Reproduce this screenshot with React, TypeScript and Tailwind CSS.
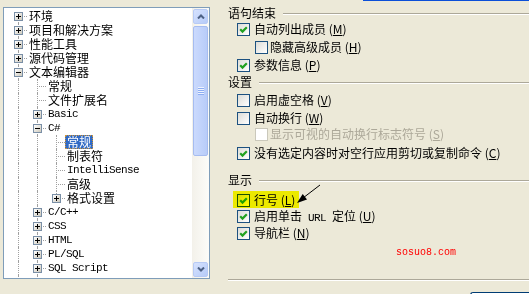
import React from 'react';

type Seg = [number, 'f' | 't' | 'b'];
type Row = { t: string; l: number; e?: '+' | '-'; mono?: boolean; sel?: boolean; v: Seg[] };

// x of the dotted guide line for each level, inside the tree box
const LX = [14, 33, 52];

const v1: Seg[] = [[0, 'f']];
const v2: Seg[] = [[0, 'f'], [1, 'f']];
const v3: Seg[] = [[0, 'f'], [1, 'f'], [2, 'f']];

const rows: Row[] = [
    { t: '环境', l: 0, e: '+', v: [[0, 'b']] },
    { t: '项目和解决方案', l: 0, e: '+', v: v1 },
    { t: '性能工具', l: 0, e: '+', v: v1 },
    { t: '源代码管理', l: 0, e: '+', v: v1 },
    { t: '文本编辑器', l: 0, e: '-', v: v1 },
    { t: '常规', l: 1, v: v2 },
    { t: '文件扩展名', l: 1, v: v2 },
    { t: 'Basic', l: 1, e: '+', mono: true, v: v2 },
    { t: 'C#', l: 1, e: '-', mono: true, v: v2 },
    { t: '常规', l: 2, sel: true, v: v3 },
    { t: '制表符', l: 2, v: v3 },
    { t: 'IntelliSense', l: 2, mono: true, v: v3 },
    { t: '高级', l: 2, v: v3 },
    { t: '格式设置', l: 2, e: '+', v: [[0, 'f'], [1, 'f'], [2, 't']] },
    { t: 'C/C++', l: 1, e: '+', mono: true, v: v2 },
    { t: 'CSS', l: 1, e: '+', mono: true, v: v2 },
    { t: 'HTML', l: 1, e: '+', mono: true, v: v2 },
    { t: 'PL/SQL', l: 1, e: '+', mono: true, v: v2 },
    { t: 'SQL Script', l: 1, e: '+', mono: true, v: v2 },
    { t: 'T-SQL', l: 1, e: '+', mono: true, v: v2 },
];

const segCls = {
    f: 'top-0 h-[14px]',
    t: 'top-0 h-[7px]',
    b: 'top-[7px] h-[7px]',
};

const mono = "font-['Liberation_Mono',monospace] text-[11px] tracking-[-0.6px]";

function Expander({ e }: { e: '+' | '-' }) {
    return (
        <div className="w-[9px] h-[9px] border border-[#7A8FA6] bg-linear-to-br from-white to-[#CDC9BC] flex items-center justify-center">
            <svg width="7" height="7" viewBox="0 0 7 7">
                <path d="M1 3.5 H6" stroke="#000" strokeWidth="1" />
                {e === '+' && <path d="M3.5 1 V6" stroke="#000" strokeWidth="1" />}
            </svg>
        </div>
    );
}

function TreeRow({ r }: { r: Row }) {
    const x = LX[r.l];
    return (
        <div className="relative h-[14px]">
            {r.v.map(([lv, k], i) => (
                <div key={i} className={`absolute w-0 border-l border-dotted border-[#A0A0A0] ${segCls[k]}`} style={{ left: LX[lv] }} />
            ))}
            <div className="absolute top-[7px] h-0 w-[9px] border-t border-dotted border-[#A0A0A0]" style={{ left: x }} />
            {r.e && (
                <div className="absolute top-[3px]" style={{ left: x - 4 }}>
                    <Expander e={r.e} />
                </div>
            )}
            <div className="h-full flex items-center" style={{ paddingLeft: r.sel ? x + 9 : x + 11 }}>
                {r.sel ? (
                    <span className="block h-[14px] px-px leading-[12px] bg-[#316AC5] text-white border border-dotted border-[#CE953A]">{r.t}</span>
                ) : (
                    <span className={`block h-[14px] leading-[14px] ${r.mono ? mono : ''}`}>{r.t}</span>
                )}
            </div>
        </div>
    );
}

function Chevron({ up }: { up?: boolean }) {
    return (
        <svg width="8" height="5" viewBox="0 0 8 5">
            <path d={up ? 'M1 4.5 L4 1.5 L7 4.5' : 'M1 0.5 L4 3.5 L7 0.5'} stroke="#4D6185" strokeWidth="2" fill="none" />
        </svg>
    );
}

function ScrollBar() {
    return (
        <div className="w-[17px] h-full flex flex-col bg-linear-to-r from-[#F3F1EA] to-[#FCFCF9]">
            <div className="mx-px mt-px h-[15px] rounded-[2px] border border-[#B7CAF5] bg-linear-to-br from-[#D6E2FE] to-[#B6CBF8] flex items-center justify-center">
                <Chevron up />
            </div>
            <div className="mx-px mt-[2px] h-[130px] rounded-[2px] border border-[#A6BCF0] bg-linear-to-r from-[#CBDAFD] to-[#B8CCF9] flex flex-col items-center justify-center">
                <div className="w-[6px] h-px bg-[#EEF3FE]" />
                <div className="w-[6px] h-px bg-[#8DADF2]" />
                <div className="w-[6px] h-px bg-[#EEF3FE]" />
                <div className="w-[6px] h-px bg-[#8DADF2]" />
                <div className="w-[6px] h-px bg-[#EEF3FE]" />
                <div className="w-[6px] h-px bg-[#8DADF2]" />
                <div className="w-[6px] h-px bg-[#EEF3FE]" />
                <div className="w-[6px] h-px bg-[#8DADF2]" />
            </div>
            <div className="mx-px mt-auto mb-px h-[15px] rounded-[2px] border border-[#B7CAF5] bg-linear-to-br from-[#D6E2FE] to-[#B6CBF8] flex items-center justify-center">
                <Chevron />
            </div>
        </div>
    );
}

function Box({ on, off }: { on?: boolean; off?: boolean }) {
    return (
        <span
            className={`w-[13px] h-[13px] border shrink-0 flex items-center justify-center ${
                off ? 'border-[#CAC8BB] bg-white' : 'border-[#1C5180] bg-linear-to-br from-[#DCDCD7] to-white'
            }`}
        >
            {on && (
                <svg width="9" height="9" viewBox="0 0 9 9">
                    <path d="M1.2 4.3 L3.5 6.6 L7.8 2.2" stroke="#21A121" strokeWidth="2.2" fill="none" />
                </svg>
            )}
        </span>
    );
}

function Mn({ k }: { k: string }) {
    return (
        <>
            {' '}(<span className="underline">{k}</span>)
        </>
    );
}

function Chk({ lv, on, off, className = '', children }: { lv: 1 | 2; on?: boolean; off?: boolean; className?: string; children: React.ReactNode }) {
    return (
        <div className={`h-[16px] flex items-center ${lv === 1 ? 'pl-[9px] gap-[4px]' : 'pl-[27px] gap-[2px]'} ${className}`}>
            <Box on={on} off={off} />
            <span className={`block h-[14px] leading-[14px] ${off ? 'text-[#ACA899]' : 'text-black'}`}>{children}</span>
        </div>
    );
}

function Etched({ className = '' }: { className?: string }) {
    return <div className={`h-0 border-t border-t-[#ACA899] border-b border-b-white ${className}`} />;
}

function Head({ t, className = '' }: { t: string; className?: string }) {
    return (
        <div className={`h-[16px] flex items-center ${className}`}>
            <span className="block h-[14px] leading-[14px]">{t}</span>
            <Etched className="flex-1 ml-[7px] mt-[2px]" />
        </div>
    );
}

export default function App() {
    return (
        <div className="relative w-[529px] h-[294px] overflow-hidden bg-[#ECE9D8] flex items-start font-['Noto_Sans_CJK_SC',sans-serif] text-[12px] leading-[14px] text-black">
            <div className="absolute top-0 left-[363px] right-0 h-px bg-[#0B4FD8]" />

            {/* tree */}
            <div className="ml-[3px] mt-[7px] w-[207px] h-[272px] shrink-0 border border-[#7F9DB9] bg-white flex">
                <div className="flex-1 overflow-hidden pt-px whitespace-nowrap">
                    {rows.map((r, i) => (
                        <TreeRow key={i} r={r} />
                    ))}
                </div>
                <ScrollBar />
            </div>

            {/* options */}
            <div className="flex-1 min-w-0 flex flex-col pt-[5px] pl-[18px] whitespace-nowrap">
                <Head t="语句结束" />
                <Chk lv={1} on>自动列出成员<Mn k="M" /></Chk>
                <Chk lv={2} className="mt-[2px]">隐藏高级成员<Mn k="H" /></Chk>
                <Chk lv={1} on className="mt-[2px]">参数信息<Mn k="P" /></Chk>

                <Head t="设置" className="mt-px" />
                <Chk lv={1} className="mt-[2px]">启用虚空格<Mn k="V" /></Chk>
                <Chk lv={1} className="mt-[2px]">自动换行<Mn k="W" /></Chk>
                <Chk lv={2} off>显示可视的自动换行标志符号<Mn k="S" /></Chk>
                <Chk lv={1} on className="mt-[3px]">没有选定内容时对空行应用剪切或复制命令<Mn k="C" /></Chk>

                <Head t="显示" className="mt-[11px]" />
                <div className="relative mt-[4px]">
                    <Chk lv={1} on>行号<Mn k="L" /></Chk>
                    <div className="absolute left-[5px] top-[-1px] w-[66px] h-[17px] bg-[#FFFF00] mix-blend-multiply" />
                </div>
                <Chk lv={1} on>启用单击<span className={mono}> URL </span>定位<Mn k="U" /></Chk>
                <Chk lv={1} on className="mt-px">导航栏<Mn k="N" /></Chk>

                <Etched className="mt-[38px]" />
                <div className="ml-auto mt-[11px] w-[59px] h-[3px] rounded-tl-[3px] border-t border-l border-[#003C74] bg-white" />
            </div>

            {/* arrow pointing at 行号 */}
            <svg className="absolute left-[293px] top-[183px]" width="30" height="24" viewBox="0 0 30 24">
                <path d="M27 2 L10 15" stroke="#000" strokeWidth="1" />
                <path d="M4 20 L14 16.6 L9.7 11.1 Z" fill="#000" />
            </svg>

            {/* watermark */}
            <div className="absolute left-[396px] top-[247px] font-['Liberation_Mono',monospace] text-[10px] leading-[12px] text-[#FF0000]">
                sosuo8.com
            </div>
        </div>
    );
}
